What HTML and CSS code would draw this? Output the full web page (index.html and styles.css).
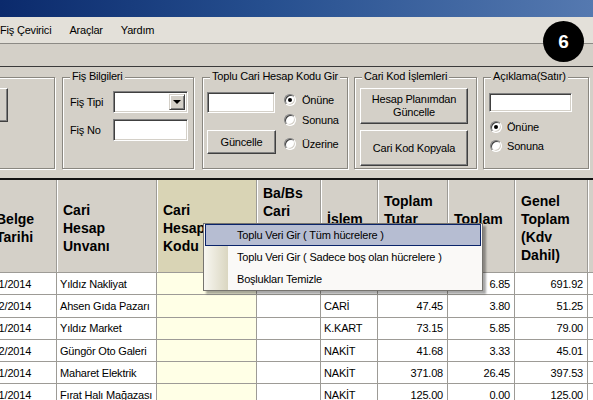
FILE: index.html
```html
<!DOCTYPE html>
<html lang="tr">
<head>
<meta charset="utf-8">
<title>Fiş</title>
<link rel="stylesheet" href="styles.css">
</head>
<body>
<div class="window">
  <div class="titlebar"></div>
  <div class="menubar">
    <span class="menu-item first">Fiş Çevirici</span>
    <span class="menu-item">Araçlar</span>
    <span class="menu-item">Yardım</span>
  </div>
  <div class="toolbar"></div>
  <div class="badge">6</div>

  <div class="groups">
    <div class="group g0">
      <div class="btn g0-btn"></div>
    </div>

    <div class="group g1">
      <span class="legend">Fiş Bilgileri</span>
      <div class="g1-grid">
        <span class="lbl">Fiş Tipi</span>
        <div class="combo"><span class="combo-btn"><span class="arrow"></span></span></div>
        <span class="lbl">Fiş No</span>
        <div class="textbox tb-fisno"></div>
      </div>
    </div>

    <div class="group g2">
      <span class="legend">Toplu Cari Hesap Kodu Gir</span>
      <div class="g2-body">
        <div class="g2-left">
          <div class="textbox tb-toplu"></div>
          <div class="btn btn-guncelle">Güncelle</div>
        </div>
        <div class="g2-right">
          <div class="radio-row"><span class="radio checked"></span><span>Önüne</span></div>
          <div class="radio-row"><span class="radio"></span><span>Sonuna</span></div>
          <div class="radio-row r3"><span class="radio"></span><span>Üzerine</span></div>
        </div>
      </div>
    </div>

    <div class="group g3">
      <span class="legend">Cari Kod İşlemleri</span>
      <div class="g3-body">
        <div class="btn btn-big">Hesap Planımdan<br>Güncelle</div>
        <div class="btn btn-big">Cari Kod Kopyala</div>
      </div>
    </div>

    <div class="group g4">
      <span class="legend">Açıklama(Satır)</span>
      <div class="g4-body">
        <div class="textbox tb-aciklama"></div>
        <div class="radio-row a1"><span class="radio checked"></span><span>Önüne</span></div>
        <div class="radio-row a2"><span class="radio"></span><span>Sonuna</span></div>
      </div>
    </div>
  </div>

  <div class="grid-wrap">
    <table class="grid">
      <colgroup>
        <col class="c1"><col class="c2"><col class="c3"><col class="c4"><col class="c5"><col class="c6"><col class="c7"><col class="c8"><col class="c9">
      </colgroup>
      <thead>
        <tr>
          <th class="first">Belge<br>Tarihi</th>
          <th>Cari<br>Hesap<br>Unvanı</th>
          <th class="kod">Cari<br>Hesap<br>Kodu</th>
          <th class="up3">Ba/Bs<br>Cari</th>
          <th class="up1">İşlem</th>
          <th class="up2">Toplam<br>Tutar</th>
          <th class="up1">Toplam</th>
          <th>Genel<br>Toplam<br>(Kdv<br>Dahil)</th>
          <th></th>
        </tr>
      </thead>
      <tbody>
        <tr><td class="first">15/01/2014</td><td>Yıldız Nakliyat</td><td class="kod"></td><td></td><td></td><td class="num"></td><td class="num">6.85</td><td class="num">691.92</td><td></td></tr>
        <tr><td class="first">12/02/2014</td><td>Ahsen Gıda Pazarı</td><td class="kod"></td><td></td><td>CARİ</td><td class="num">47.45</td><td class="num">3.80</td><td class="num">51.25</td><td></td></tr>
        <tr><td class="first">18/01/2014</td><td>Yıldız Market</td><td class="kod"></td><td></td><td>K.KART</td><td class="num">73.15</td><td class="num">5.85</td><td class="num">79.00</td><td></td></tr>
        <tr><td class="first">05/02/2014</td><td>Güngör Oto Galeri</td><td class="kod"></td><td></td><td>NAKİT</td><td class="num">41.68</td><td class="num">3.33</td><td class="num">45.01</td><td></td></tr>
        <tr><td class="first">23/01/2014</td><td>Maharet Elektrik</td><td class="kod"></td><td></td><td>NAKİT</td><td class="num">371.08</td><td class="num">26.45</td><td class="num">397.53</td><td></td></tr>
        <tr><td class="first">28/01/2014</td><td>Fırat Halı Mağazası</td><td class="kod"></td><td></td><td>NAKİT</td><td class="num">125.00</td><td class="num">0.00</td><td class="num">125.00</td><td></td></tr>
      </tbody>
    </table>
  </div>

  <div class="context-menu">
    <div class="cm-item active">Toplu Veri Gir ( Tüm hücrelere )</div>
    <div class="cm-item">Toplu Veri Gir ( Sadece boş olan hücrelere )</div>
    <div class="cm-item">Boşlukları Temizle</div>
  </div>
</div>
</body>
</html>
```
FILE: styles.css
```css
* { box-sizing: border-box; }
html, body { margin: 0; padding: 0; }
body {
  font-family: "Liberation Sans", Arial, sans-serif;
  font-size: 11px;
  letter-spacing: -0.2px;
  color: #000;
  background: #d4d0c8;
}
.window {
  position: relative;
  width: 593px;
  height: 400px;
  overflow: hidden;
  background: #d4d0c8;
}
.titlebar {
  height: 17px;
  background: linear-gradient(to right, #0b2a6c 0%, #264f8f 45%, #5579b0 100%);
}
.menubar {
  height: 27px;
  background: #e3e0d9;
  border-bottom: 1px solid #8c8a85;
  display: flex;
  align-items: center;
}
.menu-item { margin-left: 18px; }
.menu-item.first { margin-left: 0; }
.toolbar {
  height: 23px;
  background: #d4d0c8;
  border-bottom: 1px solid #3a3a3a;
}
.badge {
  position: absolute;
  left: 543px;
  top: 21px;
  width: 41px;
  height: 41px;
  border-radius: 50%;
  background: #000;
  color: #fff;
  font: bold 19px "Liberation Sans", Arial, sans-serif;
  letter-spacing: 0;
  display: flex;
  align-items: center;
  justify-content: center;
}

/* group boxes */
.groups {
  height: 113px;
  display: flex;
  align-items: flex-start;
  padding-top: 10px;
  margin-left: -46px;
  border-bottom: 2px solid #111;
}
.group {
  position: relative;
  height: 92px;
  border: 1px solid #8a8780;
  box-shadow: inset 1px 1px 0 #fff, 1px 1px 0 #fff;
  flex: none;
}
.legend {
  position: absolute;
  top: -8px;
  left: 7px;
  line-height: 13px;
  padding: 0 2px;
  background: #d4d0c8;
  white-space: nowrap;
}
.g0 { width: 101px; }
.g1 { width: 132px; margin-left: 7px; }
.g2 { width: 146px; margin-left: 8px; }
.g3 { width: 123px; margin-left: 6px; }
.g4 { width: 106px; margin-left: 6px; }

.btn {
  background: #d4d0c8;
  border: 1px solid;
  border-color: #fff #404040 #404040 #fff;
  box-shadow: inset -1px -1px 0 #808080;
  display: flex;
  align-items: center;
  justify-content: center;
  text-align: center;
  line-height: 13px;
}
.g0-btn { width: 53px; height: 34px; margin-top: 10px; }

.textbox, .combo {
  background: #fff;
  border: 1px solid;
  border-color: #808080 #fff #fff #808080;
  box-shadow: inset 1px 1px 0 #404040, inset -1px -1px 0 #d4d0c8;
}

.g1-grid {
  display: grid;
  grid-template-columns: 43px 75px;
  grid-template-rows: 22px 22px;
  row-gap: 6px;
  align-items: center;
  padding: 13px 0 0 7px;
}
.combo { height: 22px; padding: 2px; display: flex; justify-content: flex-end; }
.combo-btn {
  width: 16px;
  height: 16px;
  background: #d4d0c8;
  border: 1px solid;
  border-color: #d4d0c8 #404040 #404040 #d4d0c8;
  box-shadow: inset 1px 1px 0 #fff, inset -1px -1px 0 #808080;
  display: flex;
  align-items: center;
  justify-content: center;
}
.arrow {
  width: 0; height: 0;
  border-left: 4px solid transparent;
  border-right: 4px solid transparent;
  border-top: 4px solid #000;
}
.tb-fisno { height: 22px; }

.g2-body { display: flex; padding: 14px 0 0 4px; }
.g2-left { display: flex; flex-direction: column; }
.tb-toplu { width: 68px; height: 21px; }
.btn-guncelle { width: 69px; height: 24px; margin-top: 17px; }
.g2-right { margin-left: 8px; display: flex; flex-direction: column; }
.radio-row { display: flex; align-items: center; height: 16px; gap: 6px; }
.g2-right .radio-row + .radio-row { margin-top: 4px; }
.g2-right .radio-row.r3 { margin-top: 8px; }
.radio {
  width: 12px;
  height: 12px;
  border-radius: 50%;
  background: #fff;
  border: 1px solid;
  border-color: #808080 #fff #fff #808080;
  box-shadow: inset 1px 1px 0 #404040, inset -1px -1px 0 #d4d0c8;
  position: relative;
  flex: none;
}
.radio.checked::after {
  content: "";
  position: absolute;
  left: 3px; top: 3px;
  width: 4px; height: 4px;
  border-radius: 50%;
  background: #000;
}

.g3-body { display: flex; flex-direction: column; gap: 6px; padding: 10px 0 0 5px; }
.btn-big { width: 108px; height: 36px; }

.g4-body { padding: 15px 0 0 5px; display: flex; flex-direction: column; }
.tb-aciklama { width: 83px; height: 19px; }
.g4-body .radio-row.a1 { margin-top: 7px; margin-left: 1px; gap: 5px; }
.g4-body .radio-row.a2 { margin-top: 3px; margin-left: 1px; gap: 5px; }

/* grid */
.grid-wrap { width: 593px; overflow: hidden; background: #fff; height: 220px; }
.grid {
  table-layout: fixed;
  border-collapse: separate;
  border-spacing: 0;
  margin-left: -22px;
  width: 670px;
}
col.c1 { width: 79px; }
col.c2 { width: 100px; }
col.c3 { width: 100px; }
col.c4 { width: 64px; }
col.c5 { width: 57px; }
col.c6 { width: 70px; }
col.c7 { width: 67px; }
col.c8 { width: 73px; }
col.c9 { width: 60px; }
.grid th {
  height: 93px;
  background: #d4d0c8;
  font: bold 14px "Liberation Sans", Arial, sans-serif;
  letter-spacing: 0;
  line-height: 18px;
  text-align: left;
  vertical-align: middle;
  padding: 3px 4px 0 6px;
  border-right: 1px solid #9d9b96;
  border-bottom: 1px solid #9d9b96;
  box-shadow: inset 1px 0 0 #fff;
  overflow: hidden;
  white-space: nowrap;
}
.grid th.first { padding-left: 18px; }
.grid th.kod { background: #d9d4b5; }
.grid th.up1 { padding-bottom: 18px; }
.grid th.up2 { padding-bottom: 36px; }
.grid th.up3 { padding-bottom: 52px; }
.grid td {
  height: 22.3px;
  padding: 0 3px;
  border-right: 1px solid #9d9b96;
  border-bottom: 1px solid #9d9b96;
  white-space: nowrap;
  overflow: hidden;
  background: #fff;
}
.grid td.first { padding-left: 0; }
.grid td.kod { background: #ffffe6; }
.grid td.num { text-align: right; padding-right: 4px; }

/* context menu */
.context-menu {
  position: absolute;
  left: 203px;
  top: 223px;
  width: 280px;
  height: 68px;
  border: 1px solid #76746f;
  background: linear-gradient(to right, #f8f7f1 0px, #dad6c1 24px, #faf9f7 24px);
  box-shadow: 3px 3px 2px rgba(0, 0, 0, 0.35);
}
.cm-item {
  height: 22px;
  line-height: 20px;
  padding-left: 31px;
  border: 1px solid transparent;
  margin: 0 1px;
  white-space: nowrap;
}
.cm-item.active {
  background: #b6bdd2;
  border-color: #0a246a;
}
```
